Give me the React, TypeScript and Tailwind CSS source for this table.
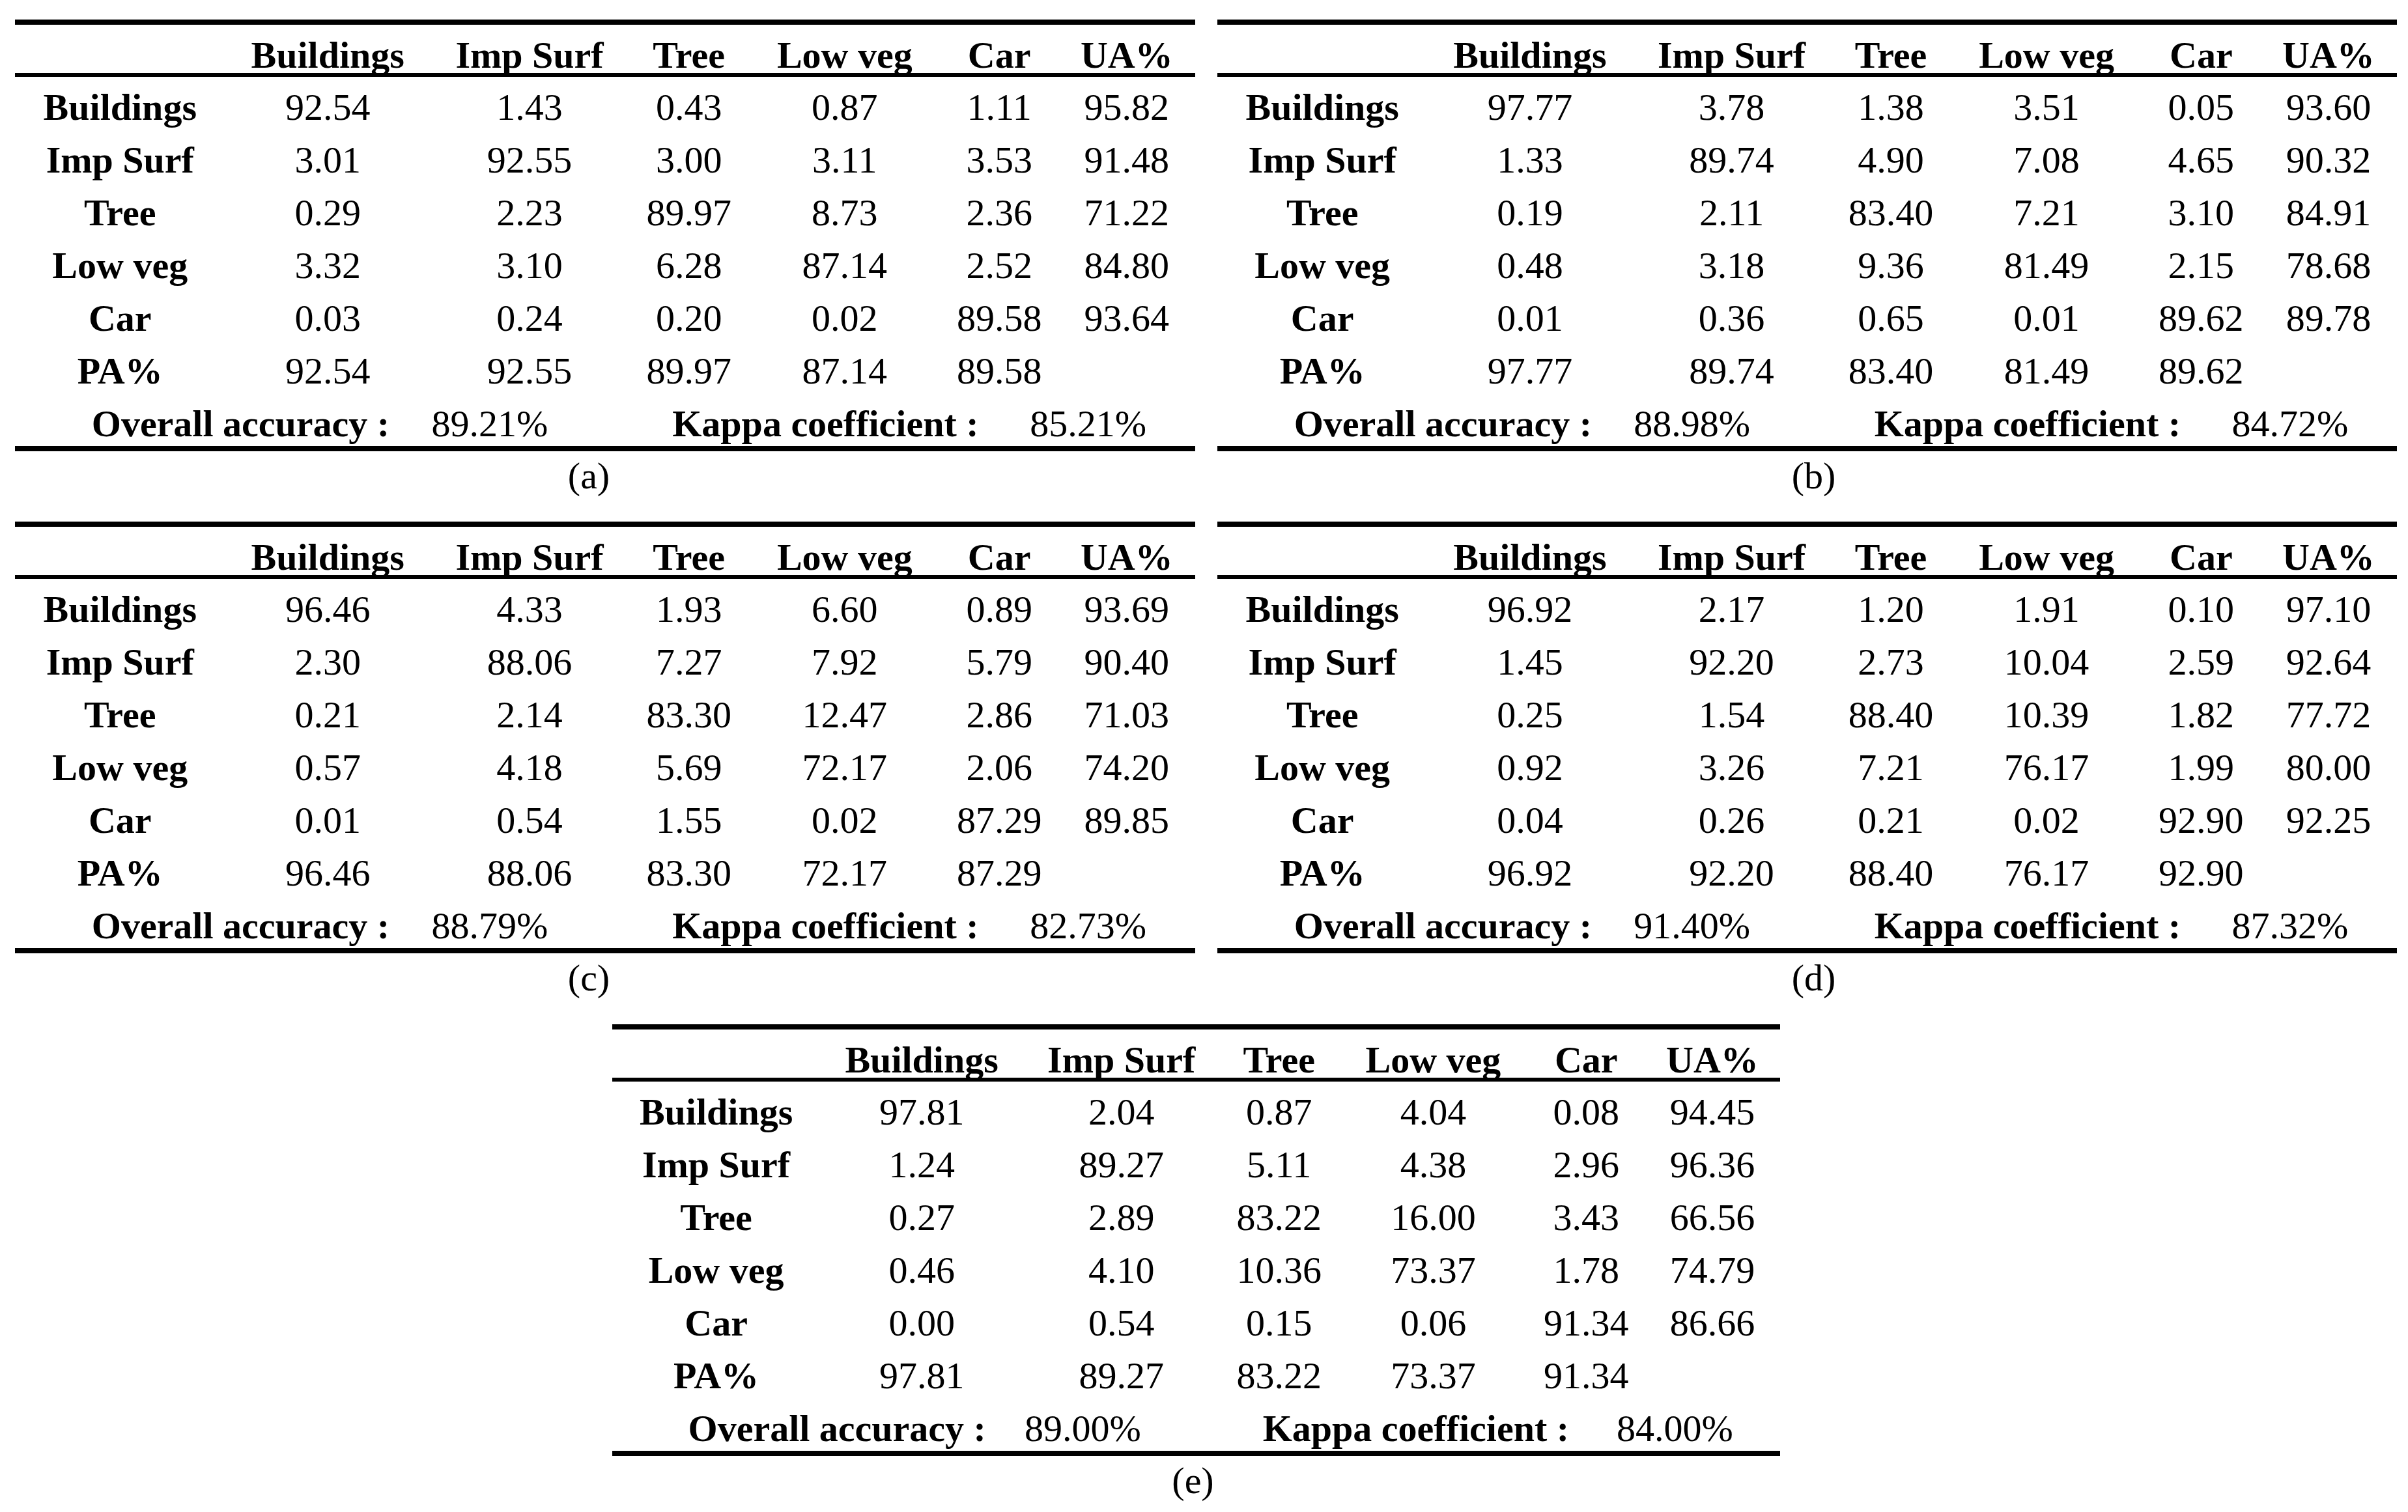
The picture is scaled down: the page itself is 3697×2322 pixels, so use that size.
import React from "react";

type Table = {
  tag: string;
  rows: string[][];
  pa: string[];
  oa: string;
  kappa: string;
  capShift: string;
};

const heads = ["Buildings", "Imp Surf", "Tree", "Low veg", "Car", "UA%"];
const names = ["Buildings", "Imp Surf", "Tree", "Low veg", "Car"];

const tables: Table[] = [
  {
    tag: "(a)",
    rows: [
      ["92.54", "1.43", "0.43", "0.87", "1.11", "95.82"],
      ["3.01", "92.55", "3.00", "3.11", "3.53", "91.48"],
      ["0.29", "2.23", "89.97", "8.73", "2.36", "71.22"],
      ["3.32", "3.10", "6.28", "87.14", "2.52", "84.80"],
      ["0.03", "0.24", "0.20", "0.02", "89.58", "93.64"],
    ],
    pa: ["92.54", "92.55", "89.97", "87.14", "89.58"],
    oa: "89.21%",
    kappa: "85.21%",
    capShift: "pr-[50px]",
  },
  {
    tag: "(b)",
    rows: [
      ["97.77", "3.78", "1.38", "3.51", "0.05", "93.60"],
      ["1.33", "89.74", "4.90", "7.08", "4.65", "90.32"],
      ["0.19", "2.11", "83.40", "7.21", "3.10", "84.91"],
      ["0.48", "3.18", "9.36", "81.49", "2.15", "78.68"],
      ["0.01", "0.36", "0.65", "0.01", "89.62", "89.78"],
    ],
    pa: ["97.77", "89.74", "83.40", "81.49", "89.62"],
    oa: "88.98%",
    kappa: "84.72%",
    capShift: "pl-[20px]",
  },
  {
    tag: "(c)",
    rows: [
      ["96.46", "4.33", "1.93", "6.60", "0.89", "93.69"],
      ["2.30", "88.06", "7.27", "7.92", "5.79", "90.40"],
      ["0.21", "2.14", "83.30", "12.47", "2.86", "71.03"],
      ["0.57", "4.18", "5.69", "72.17", "2.06", "74.20"],
      ["0.01", "0.54", "1.55", "0.02", "87.29", "89.85"],
    ],
    pa: ["96.46", "88.06", "83.30", "72.17", "87.29"],
    oa: "88.79%",
    kappa: "82.73%",
    capShift: "pr-[50px]",
  },
  {
    tag: "(d)",
    rows: [
      ["96.92", "2.17", "1.20", "1.91", "0.10", "97.10"],
      ["1.45", "92.20", "2.73", "10.04", "2.59", "92.64"],
      ["0.25", "1.54", "88.40", "10.39", "1.82", "77.72"],
      ["0.92", "3.26", "7.21", "76.17", "1.99", "80.00"],
      ["0.04", "0.26", "0.21", "0.02", "92.90", "92.25"],
    ],
    pa: ["96.92", "92.20", "88.40", "76.17", "92.90"],
    oa: "91.40%",
    kappa: "87.32%",
    capShift: "pl-[20px]",
  },
  {
    tag: "(e)",
    rows: [
      ["97.81", "2.04", "0.87", "4.04", "0.08", "94.45"],
      ["1.24", "89.27", "5.11", "4.38", "2.96", "96.36"],
      ["0.27", "2.89", "83.22", "16.00", "3.43", "66.56"],
      ["0.46", "4.10", "10.36", "73.37", "1.78", "74.79"],
      ["0.00", "0.54", "0.15", "0.06", "91.34", "86.66"],
    ],
    pa: ["97.81", "89.27", "83.22", "73.37", "91.34"],
    oa: "89.00%",
    kappa: "84.00%",
    capShift: "pr-[10px]",
  },
];

const cols = "grid grid-cols-[17.8%_17.4%_16.8%_10.2%_16.2%_10%_11.6%]";

const Cell = ({ children, bold }: { children?: React.ReactNode; bold?: boolean }) => (
  <div className={`flex justify-center whitespace-nowrap min-w-0 ${bold ? "font-bold" : ""}`}>
    <span>{children}</span>
  </div>
);

const Matrix = ({ t, width }: { t: Table; width: string }) => {
  return (
    <div className={`${width} flex flex-col`}>
      <div className="h-[8px] bg-black" />
      <div className={`${cols} h-[74px] pt-[20px] leading-[54px]`}>
        <Cell />
        {heads.map((h) => (
          <Cell key={h} bold>
            {h}
          </Cell>
        ))}
      </div>
      <div className="h-[6px] bg-black" />
      <div className="pt-[6px]">
        {t.rows.map((r, i) => (
          <div key={i} className={`${cols} h-[81px] items-center leading-[81px]`}>
            <Cell bold>{names[i]}</Cell>
            {r.map((v, j) => (
              <Cell key={j}>{v}</Cell>
            ))}
          </div>
        ))}
        <div className={`${cols} h-[81px] items-center leading-[81px]`}>
          <Cell bold>PA%</Cell>
          {t.pa.map((v, j) => (
            <Cell key={j}>{v}</Cell>
          ))}
          <Cell />
        </div>
        <div className="grid grid-cols-[6.5%_28.8%_20.4%_30.3%_14%] h-[75px] pt-[6px] leading-[69px] whitespace-nowrap">
          <div />
          <div className="font-bold">Overall accuracy :</div>
          <div>{t.oa}</div>
          <div className="font-bold">Kappa coefficient :</div>
          <div>{t.kappa}</div>
        </div>
      </div>
      <div className="h-[8px] bg-black" />
      <div className={`h-[76px] leading-[76px] text-center ${t.capShift}`}>{t.tag}</div>
    </div>
  );
};

export default function App() {
  return (
    <div className="w-[3697px] h-[2322px] bg-white text-black overflow-hidden pt-[30px] text-[58px] font-['Liberation_Serif',serif]">
      <div className="flex gap-[34px] pl-[23px]">
        <Matrix t={tables[0]} width="w-[1812px]" />
        <Matrix t={tables[1]} width="w-[1811px]" />
      </div>
      <div className="flex gap-[34px] pl-[23px] mt-[32px]">
        <Matrix t={tables[2]} width="w-[1812px]" />
        <Matrix t={tables[3]} width="w-[1811px]" />
      </div>
      <div className="mt-[33px] pl-[940px]">
        <Matrix t={tables[4]} width="w-[1793px]" />
      </div>
    </div>
  );
}
